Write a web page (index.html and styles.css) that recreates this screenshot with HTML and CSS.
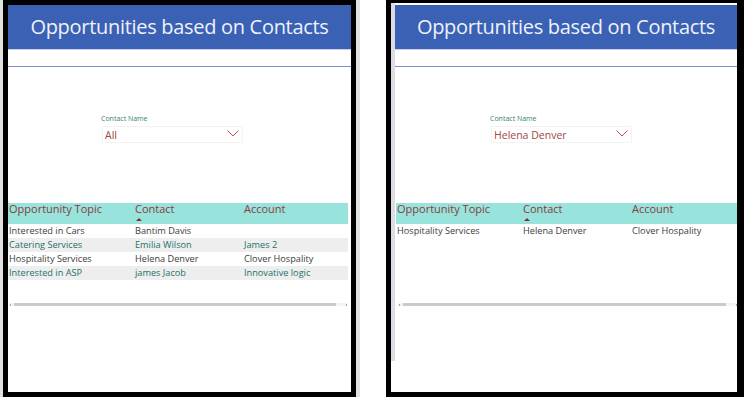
FILE: index.html
```html
<!DOCTYPE html>
<html>
<head>
<meta charset="utf-8">
<link rel="stylesheet" href="styles.css">
</head>
<body>
  <div class="edge"></div>
  <div class="panel panel-left">
    <div class="content">
      <div class="title">Opportunities based on Contacts</div>
      <div class="divider"></div>
      <div class="filter">
        <div class="label">Contact Name</div>
        <div class="select">
          <span>All</span>
          <svg class="chev" width="12" height="7" viewBox="0 0 12 7"><path d="M0.5 0.5 L6 6 L11.5 0.5" fill="none" stroke="#c0504d" stroke-width="1"/></svg>
        </div>
      </div>
      <div class="table">
        <div class="thead">
          <div class="th c1">Opportunity Topic</div>
          <div class="th c2">Contact<span class="sort"></span></div>
          <div class="th c3">Account</div>
        </div>
        <div class="tr">
          <div class="td c1">Interested in Cars</div>
          <div class="td c2">Bantim Davis</div>
          <div class="td c3"></div>
        </div>
        <div class="tr alt">
          <div class="td c1">Catering Services</div>
          <div class="td c2">Emilia Wilson</div>
          <div class="td c3">James 2</div>
        </div>
        <div class="tr">
          <div class="td c1">Hospitality Services</div>
          <div class="td c2">Helena Denver</div>
          <div class="td c3">Clover Hospality</div>
        </div>
        <div class="tr alt">
          <div class="td c1">Interested in ASP</div>
          <div class="td c2">james Jacob</div>
          <div class="td c3">Innovative logic</div>
        </div>
      </div>
      <div class="scroll scroll-left">
        <span class="mark"></span><span class="thumb"></span><span class="mark"></span>
      </div>
    </div>
  </div>
  <div class="edge edge-mid"></div>
  <div class="gap"></div>
  <div class="panel panel-right">
    <div class="side"></div>
    <div class="content">
      <div class="title">Opportunities based on Contacts</div>
      <div class="divider"></div>
      <div class="filter filter-right">
        <div class="label">Contact Name</div>
        <div class="select">
          <span>Helena Denver</span>
          <svg class="chev" width="12" height="7" viewBox="0 0 12 7"><path d="M0.5 0.5 L6 6 L11.5 0.5" fill="none" stroke="#c0504d" stroke-width="1"/></svg>
        </div>
      </div>
      <div class="table table-right">
        <div class="thead">
          <div class="th c1">Opportunity Topic</div>
          <div class="th c2">Contact<span class="sort"></span></div>
          <div class="th c3">Account</div>
        </div>
        <div class="tr">
          <div class="td c1">Hospitality Services</div>
          <div class="td c2">Helena Denver</div>
          <div class="td c3">Clover Hospality</div>
        </div>
      </div>
      <div class="scroll scroll-right">
        <span class="mark"></span><span class="thumb"></span><span class="mark"></span>
      </div>
    </div>
  </div>
</body>
</html>
```
FILE: styles.css
```css
html, body {
  margin: 0;
  padding: 0;
}
body {
  width: 746px;
  height: 397px;
  overflow: hidden;
  display: flex;
  align-items: flex-start;
  background: #ffffff;
  font-family: "Open Sans", "Noto Sans", sans-serif;
}
.edge {
  width: 3px;
  height: 397px;
  background: #e2e2e2;
  flex: none;
}
.edge-mid {
  width: 4px;
}
.gap {
  width: 26px;
  flex: none;
}
.panel {
  flex: none;
  background: #fff;
  border: 0 solid #000;
  display: flex;
  align-items: flex-start;
}
.panel-left {
  width: 343px;
  height: 387px;
  border-width: 5px;
}
.panel-right {
  width: 346px;
  height: 389px;
  border-width: 3px 7px 5px 5px;
}
.side {
  width: 4px;
  height: 358px;
  background: #dcdce2;
  flex: none;
}
.content {
  flex: 1;
  min-width: 0;
  display: flex;
  flex-direction: column;
}
.panel-right .content {
  padding-top: 2px;
}
.title {
  height: 44px;
  background: #3a61b4;
  color: #eef2fa;
  font-size: 20px;
  line-height: 44px;
  text-align: center;
  letter-spacing: -0.3px;
  box-shadow: 0 1px 0 #c8d0ea;
}
.divider {
  margin-top: 17px;
  height: 1px;
  background: #7f8dd2;
}
.filter {
  margin-top: 48px;
  padding-left: 93px;
  display: flex;
  flex-direction: column;
}
.filter-right {
  padding-left: 95px;
}
.label {
  font-size: 7px;
  line-height: 8px;
  color: #3a7f78;
  margin-bottom: 3px;
}
.select {
  width: 134px;
  height: 15px;
  margin-left: 1px;
  border: 1px solid #f3f3f3;
  display: flex;
  align-items: center;
  justify-content: space-between;
  padding: 0 3px 0 2px;
  box-sizing: content-box;
}
.select span {
  font-size: 10.5px;
  color: #a4453f;
  line-height: 15px;
  padding-top: 2px;
}
.chev {
  margin-top: -2px;
}
.table {
  margin-top: 60px;
  width: 340px;
  font-size: 9.2px;
}
.table-right {
  margin-left: 1px;
  width: 341px;
}
.thead {
  height: 21px;
  background: #98e3dc;
  display: flex;
}
.th {
  color: #8a3b3b;
  font-size: 11px;
  line-height: 14px;
  padding-top: 0;
  margin-top: -1px;
  display: flex;
  flex-direction: column;
  align-items: flex-start;
}
.sort {
  width: 0;
  height: 0;
  border-left: 3.5px solid transparent;
  border-right: 3.5px solid transparent;
  border-bottom: 3px solid #8a2c2c;
  margin-top: 2px;
  margin-left: 1px;
}
.c1 { width: 126px; padding-left: 1px; flex: none; }
.c2 { width: 109px; flex: none; }
.c3 { flex: 1; }
.tr {
  height: 14px;
  display: flex;
  align-items: center;
  color: #3d3d3d;
  line-height: 14px;
}
.tr.alt {
  background: #eeeeee;
  color: #22726a;
}
.scroll {
  display: flex;
  align-items: center;
  height: 3px;
  background: #f3f3f3;
}
.scroll-left {
  margin-top: 23px;
  width: 337px;
  margin-left: 1px;
  padding-left: 1px;
}
.scroll-right {
  margin-top: 65px;
  width: 338px;
  margin-left: 3px;
  padding-left: 1px;
}
.mark {
  width: 1px;
  height: 2px;
  background: #a8a8a8;
  flex: none;
}
.thumb {
  height: 3px;
  background: #cbcbcb;
  margin: 0 10px 0 3px;
  flex: 1;
}
```
